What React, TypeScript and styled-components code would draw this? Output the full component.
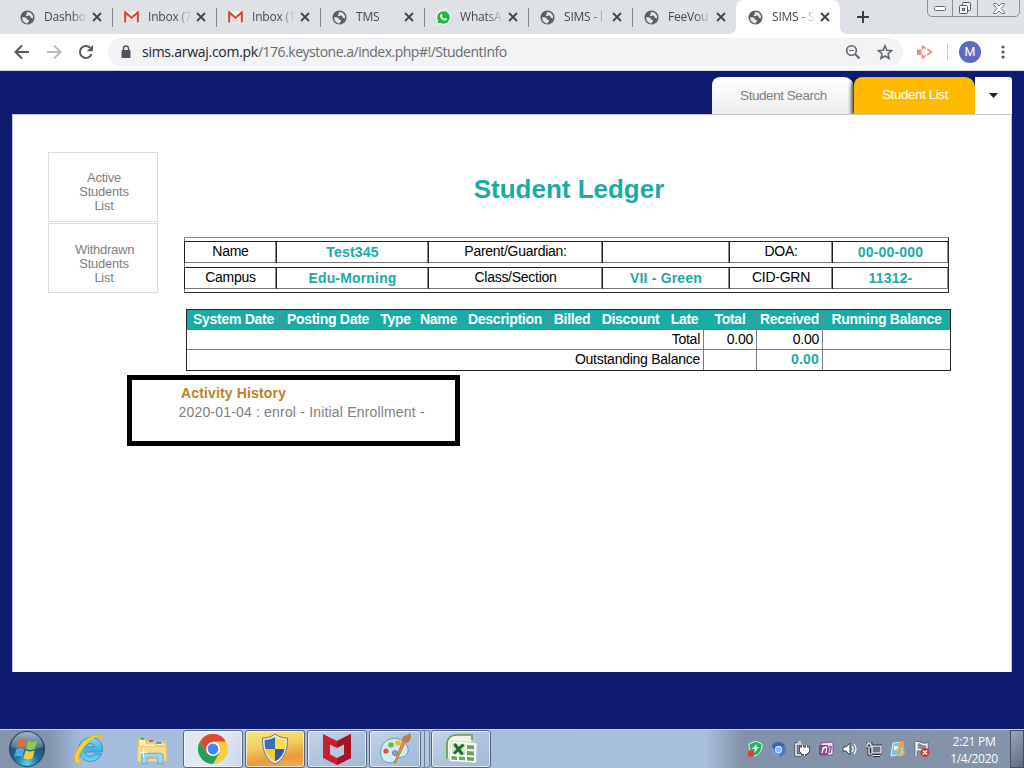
import React from "react";
import styled, { createGlobalStyle, css } from "styled-components";

const Global = createGlobalStyle`
  * { box-sizing: border-box; }
  body { margin: 0; overflow: hidden; }
`;

const uiFont = css`font-family: "Open Sans", "Noto Sans", sans-serif;`;

const Screen = styled.div`
  width: 1024px;
  height: 768px;
  display: flex;
  flex-direction: column;
  overflow: hidden;
  background: #0d1c70;
  font-family: "Liberation Sans", Arial, sans-serif;
`;

/* ---------- browser ---------- */

const TabStrip = styled.div`
  height: 34px;
  flex: none;
  display: flex;
  padding-left: 8px;
  background: #dee1e6;
  position: relative;
  ${uiFont}
`;

const BrowserTab = styled.div<{ $active?: boolean; $last?: boolean }>`
  width: 104px;
  height: 34px;
  padding: 0 10px 0 12px;
  display: flex;
  align-items: center;
  position: relative;
  font-size: 12px;
  color: #45484c;
  background: ${(p) => (p.$active ? "#fff" : "transparent")};
  border-radius: 8px 8px 0 0;
  &::before {
    content: "";
    display: ${(p) => (p.$active ? "block" : "none")};
    position: absolute;
    left: -6px;
    right: -6px;
    bottom: 0;
    height: 6px;
    background:
      radial-gradient(circle at 0 0, transparent 5.5px, #fff 6px) left / 6px 6px no-repeat,
      radial-gradient(circle at 100% 0, transparent 5.5px, #fff 6px) right / 6px 6px no-repeat;
  }
  &::after {
    content: "";
    position: absolute;
    right: -1px;
    top: 8px;
    width: 1px;
    height: 19px;
    background: ${(p) => (p.$active || p.$last ? "transparent" : "#85888d")};
  }
`;

const TabTitle = styled.span`
  width: 42px;
  flex: none;
  margin-left: 9px;
  white-space: nowrap;
  letter-spacing: -0.2px;
  line-height: 18px;
  mask-image: linear-gradient(90deg, #000 65%, rgba(0, 0, 0, 0.2) 95%);
`;

const TabClose = styled.svg`
  width: 10px;
  height: 10px;
  flex: none;
  margin-left: auto;
`;

const NewTab = styled.svg`
  width: 14px;
  height: 14px;
  margin: 10px 0 0 16px;
`;

const WindowButtons = styled.div`
  position: absolute;
  top: -1px;
  right: 4px;
  width: 93px;
  height: 18px;
  display: grid;
  grid-template-columns: 24px 25px 1fr;
  border: 1px solid #8b8e93;
  border-radius: 0 0 5px 5px;
  background: #dfe2e7;
`;

const WindowButton = styled.div`
  display: flex;
  align-items: center;
  justify-content: center;
  & + & { border-left: 1px solid #8b8e93; }
`;

const Toolbar = styled.div`
  height: 37px;
  flex: none;
  display: flex;
  align-items: center;
  background: #fff;
  border-bottom: 1px solid #d8dbe0;
  padding-left: 14px;
  ${uiFont}
`;

const NavIcon = styled.svg`
  width: 16px;
  height: 16px;
  flex: none;
  margin-right: 16px;
`;

const Address = styled.div`
  width: 795px;
  height: 28px;
  margin-left: -2px;
  padding: 0 10px 0 11px;
  display: flex;
  align-items: center;
  gap: 16px;
  border-radius: 14px;
  background: #f1f3f4;
`;

const Url = styled.div`
  flex: 1;
  margin-left: -7px;
  font-size: 14px;
  letter-spacing: -0.5px;
  line-height: 20px;
  color: #676a6e;
  white-space: nowrap;
  b { font-weight: 400; color: #222427; letter-spacing: -0.27px; }
`;

const ExtensionIcon = styled.svg`
  width: 18px;
  height: 14px;
  margin-left: 13px;
`;

const Divider = styled.div`
  width: 1px;
  height: 16px;
  margin: 0 11px 0 13px;
  background: #c5c8cc;
`;

const Avatar = styled.div`
  width: 22px;
  height: 22px;
  margin-right: 19px;
  border-radius: 50%;
  background: #5c6bc0;
  color: #fff;
  font: 12.5px/22px Roboto, sans-serif;
  text-align: center;
`;

/* ---------- page ---------- */

const Page = styled.main`
  height: 658px;
  flex: none;
  padding: 6px 12px 57px;
  display: flex;
  flex-direction: column;
`;

const SectionTabs = styled.nav`
  height: 37px;
  flex: none;
  display: flex;
  justify-content: flex-end;
`;

const SectionTab = styled.div<{ $active?: boolean }>`
  width: ${(p) => (p.$active ? 121 : 142)}px;
  height: 37px;
  border-radius: 8px 10px 0 0;
  font-size: 13.5px;
  letter-spacing: -0.45px;
  line-height: ${(p) => (p.$active ? 35 : 37)}px;
  text-align: center;
  padding-left: 1px;
  color: ${(p) => (p.$active ? "#fff" : "#808080")};
  background: ${(p) => (p.$active ? "#ffba00" : "linear-gradient(#fff, #ededed)")};
  box-shadow: ${(p) => (p.$active ? "-2px 1px 4px rgba(0,0,0,.9)" : "none")};
  clip-path: ${(p) => (p.$active ? "inset(0 0 0 -6px)" : "none")};
  z-index: ${(p) => (p.$active ? 1 : 0)};
`;

const TabMenu = styled.div`
  width: 37px;
  border-radius: 0 3px 0 0;
  background: #fff;
  display: flex;
  align-items: center;
  justify-content: center;
`;

const Panel = styled.div`
  flex: 1;
  background: #fff;
  border: 1px solid #c5c5c9;
  border-bottom: 0;
  display: flex;
`;

const SideMenu = styled.div`
  width: 110px;
  margin: 37px 0 0 35px;
  display: flex;
  flex-direction: column;
  gap: 1px;
`;

const SideItem = styled.div`
  height: 70px;
  padding: 18px 24px 0 26px;
  border: 1px solid #dcdcdc;
  font-size: 13px;
  letter-spacing: -0.25px;
  line-height: 14px;
  text-align: center;
  color: #808080;
  & + & { padding-top: 19px; }
`;

const Content = styled.section`
  width: 824px;
  margin-left: -31px;
  padding-top: 58px;
`;

const Title = styled.h1`
  margin: 0 0 0 58px;
  width: 768px;
  font-size: 26px;
  line-height: 32px;
  font-weight: 700;
  text-align: center;
  color: #1aaba8;
`;

const InfoTable = styled.div`
  width: 765px;
  height: 56px;
  margin: 32px 0 0 57px;
  padding: 3px 0;
  display: flex;
  flex-direction: column;
  gap: 4px;
  border: 1px solid #2c2c2c;
  border-top-color: #888;
  border-left-color: #777;
`;

const InfoRow = styled.div`
  height: 22px;
  margin-left: -1px;
  display: grid;
  grid-template-columns: 92px 152px 174px 127px 103px 116px;
  border-top: 1px solid #222;
  border-bottom: 1px solid #777;
`;

const InfoCell = styled.div<{ $value?: boolean }>`
  border-left: 1px solid #222;
  border-right: 1px solid #8a8a8a;
  padding-left: 1px;
  font-size: 14px;
  font-weight: ${(p) => (p.$value ? 700 : 400)};
  letter-spacing: ${(p) => (p.$value ? "0.17px" : "-0.27px")};
  line-height: ${(p) => (p.$value ? 21 : 19)}px;
  color: ${(p) => (p.$value ? "#1aaba8" : "#000")};
  text-align: center;
  white-space: nowrap;
`;

const Ledger = styled.div`
  width: 765px;
  height: 62px;
  margin: 16px 0 0 59px;
  border: 1px solid #222;
`;

const LedgerHead = styled.div`
  height: 19px;
  display: grid;
  grid-template-columns: 94px 95px 40px 46px 87px 47px 70px 38px 53px 66px 127px;
  background: #18aba8;
`;

const HeadCell = styled.div`
  border-right: 1px solid #5e908f;
  font-size: 14px;
  letter-spacing: -0.28px;
  line-height: 18px;
  font-weight: 700;
  text-align: center;
  white-space: nowrap;
  color: #fff;
  &:last-child { border-right: 0; }
`;

const LedgerRow = styled.div`
  height: 20px;
  display: grid;
  grid-template-columns: 517px 53px 66px 127px;
  border-top: 1px solid #7b7b7b;
  &:last-child { height: 21px; }
`;

const LedgerCell = styled.div<{ $accent?: boolean }>`
  border-right: 1px solid #7b7b7b;
  padding-right: 3px;
  font-size: 14px;
  line-height: 19px;
  font-weight: ${(p) => (p.$accent ? 700 : 400)};
  letter-spacing: ${(p) => (p.$accent ? "0.2px" : "-0.26px")};
  color: ${(p) => (p.$accent ? "#1aaba8" : "#000")};
  text-align: right;
  &:last-child { border-right: 0; }
`;

const History = styled.div`
  width: 333px;
  height: 71px;
  margin-top: 4px;
  padding: 4px 0 0 46px;
  border: 5px solid #000;
  white-space: nowrap;
`;

const HistoryTitle = styled.div`
  margin-left: 3px;
  font-size: 14px;
  line-height: 18px;
  letter-spacing: 0.15px;
  font-weight: 700;
  color: #be8126;
`;

const HistoryEntry = styled.div`
  margin-left: 0.5px;
  font-size: 14px;
  line-height: 20px;
  letter-spacing: 0.18px;
  color: #808080;
`;

/* ---------- taskbar ---------- */

const Taskbar = styled.footer`
  height: 39px;
  flex: none;
  display: flex;
  align-items: stretch;
  background: linear-gradient(90deg, #8494ac 0, #8294ad 48px, #a4bddd 82px, #a7c0dd 705px, #8192a9 742px, #8293aa 100%);
  border-top: 1px solid #c3d5e6;
  color: #fff;
  ${uiFont}
`;

const Launcher = styled.div<{ $width: number }>`
  width: ${(p) => p.$width}px;
  display: flex;
  align-items: center;
  justify-content: center;
`;

const TaskButton = styled.div<{ $tone?: "active" | "alert"; $width?: number }>`
  width: ${(p) => p.$width ?? 60}px;
  margin-right: 2px;
  display: flex;
  align-items: center;
  justify-content: center;
  border: 1px solid #53657f;
  border-radius: 3px;
  box-shadow: inset 0 0 0 1px rgba(255, 255, 255, 0.65);
  background: ${(p) =>
    p.$tone === "active"
      ? "linear-gradient(120deg, #dce6f3, #e3eaf4 50%, #c9d7ea)"
      : p.$tone === "alert"
      ? "linear-gradient(170deg, #f3e984, #f2cf62 40%, #eb9a3c 72%, #f0b05a)"
      : "linear-gradient(150deg, #c5d5e9, #afc4df 50%, #a2b9d7)"};
`;

const StackEdges = styled.div`
  width: 9px;
  margin: 0 1px 0 -2px;
  border: solid #6e819d;
  border-width: 1px 1px 1px 0;
  border-radius: 0 3px 3px 0;
  background: linear-gradient(90deg, #b5c8e0 3px, #6e819d 3px, #6e819d 4px, #b5c8e0 4px);
`;

const Tray = styled.div`
  margin-left: auto;
  display: flex;
  align-items: center;
  gap: 8px;
`;

const Clock = styled.div`
  width: 72px;
  font-size: 12px;
  line-height: 17px;
  letter-spacing: -0.3px;
  text-align: center;
  padding-top: 1px;
`;

const ShowDesktop = styled.div`
  width: 14px;
  height: 38px;
  margin-left: -8px;
  border: 1px solid #414e61;
  background: linear-gradient(135deg, #9aa8bb, #5c6b82);
`;

/* ---------- icons ---------- */

const Globe = () => (
  <svg width="15" height="15" viewBox="0 0 16 16">
    <circle cx="8" cy="8" r="7.5" fill="#5a5e63" />
    <path d="M2.2 7.6 5.5 8c1.2.1 1.8.8 1.8 2l2 .7c.8.4.6 1.4-.4 1.900l-.3 1.500C5.200 14.400 2 11.500 2.200 7.600zM8.600 2c-1.800.4-1.900 1.300-1.200 2.300L5.900 5.600C6.500 6.800 8.200 7 8.500 5.600L11 6.500 11.300 8.200 13.900 9C14.500 5.500 12 2.300 8.600 2z" fill="#e3e6ea" />
  </svg>
);

const Gmail = () => (
  <svg width="15" height="12" viewBox="0 0 15 12">
    <path d="M1 .6h13v11H1z" fill="#f4f1ef" />
    <path d="m3 11 4.500-4.500L12 11z" fill="#dedad8" />
    <path d="M1.200 11.500V1.400l6.300 5.300 6.300-5.300v10.100" fill="none" stroke="#d74236" strokeWidth="2" />
  </svg>
);

const Whatsapp = () => (
  <svg width="15" height="15" viewBox="0 0 16 16">
    <path d="M8 0A7.900 7.900 0 0 0 1.200 11.800L.2 15.900l4-1A7.900 7.900 0 1 0 8 0z" fill="#fff" />
    <path d="M8 1.200a6.700 6.700 0 0 0-5.700 10.200l-.8 3 3-.8A6.700 6.700 0 1 0 8 1.200z" fill="#16bd40" />
    <path d="M5.200 4.300c.6-.5 1-.2 1.200.4l.5 1.100-.6.9c.7 1.300 1.600 2 2.700 2.500l.8-1 1.800.9c.3.4-.2 1.800-1.500 2.100-2.600.6-6.400-3.100-5.800-5.200.1-.7.5-1.300.9-1.700z" fill="#fff" />
  </svg>
);

const favicons = { globe: Globe, gmail: Gmail, whatsapp: Whatsapp };

const StartOrb = () => (
  <svg width="38" height="38" viewBox="0 0 38 38">
    <defs>
      <radialGradient id="orb" cx=".5" cy=".92" r=".75">
        <stop offset="0" stopColor="#57d9f6" />
        <stop offset=".45" stopColor="#1d6d9c" />
        <stop offset="1" stopColor="#21445f" />
      </radialGradient>
      <linearGradient id="orbGloss" x2="0" y2="1">
        <stop stopColor="#c8d8e2" />
        <stop offset="1" stopColor="#5b8198" />
      </linearGradient>
    </defs>
    <circle cx="19" cy="19" r="17.500" fill="url(#orb)" stroke="#24445d" />
    <path d="M3 17a16 15 0 0 1 32 0c-8 3-24 3-32 0z" fill="url(#orbGloss)" opacity=".75" />
    <g transform="translate(-1.900 -1.900) scale(1.100)">
      <path d="M11.500 10.500c2.500-1.500 5-1.300 7 .1l-1.700 7.500c-2.300-1.500-4.800-1.500-7.300-.2z" fill="#eb6a31" />
      <path d="M19.700 11.500c2.700 1.500 5.200 1.500 8.500-.2l-2 7.500c-2.800 1.600-5.800 1.500-8.200 0z" fill="#90c948" />
      <path d="M9.200 19.200c2.500-1.500 5-1.300 7.300.1l-1.800 7.200c-2.300-1.500-4.600-1.500-7.300-.2z" fill="#4aaee9" />
      <path d="M17.700 20.200c2.600 1.500 5.200 1.500 8.300 0l-2 7.300c-2.700 1.500-5.600 1.400-8.200-.1z" fill="#fac93c" />
    </g>
  </svg>
);

const Explorer = () => (
  <svg width="32" height="32" viewBox="0 0 32 32">
    <defs>
      <linearGradient id="ie" x2="0" y2="1">
        <stop stopColor="#86def8" />
        <stop offset=".5" stopColor="#3fb2e8" />
        <stop offset="1" stopColor="#76d6f5" />
      </linearGradient>
    </defs>
    <path d="M17 4.500a12 12 0 1 0 11.500 16.500h-7c-2.500 4-9 2.500-9-2h17C30.500 10 25 4.500 17 4.500zm-4.500 9.500c1-4.500 8.300-4.500 9.200 0z" fill="url(#ie)" stroke="#258bc8" strokeWidth=".9" />
    <path d="M29 9.500C32.500-1 22 1 14.500 5.500 6 11 .5 21.500 1.500 27.500c1 4.500 7 2.500 9.500.5-3 .5-5.500 0-5.500-3C6 18.500 16 7.500 22.500 4.500c4-1.500 6.500 0 6.500 5z" fill="#f8cf35" stroke="#d8a321" strokeWidth=".5" />
  </svg>
);

const Folder = () => (
  <svg width="32" height="31" viewBox="0 0 34 32">
    <path d="M2 4h9l1 3h20v22H2z" fill="#e9ca76" />
    <path d="M3 5h7l1 4h21v5H3zM11 7h9l1 3H11zM21 8h9v4h-9z" fill="#fff0b4" stroke="#d2ae5d" strokeWidth=".7" />
    <path d="M5 3.500h4v2H5z" fill="#37a64b" />
    <path d="M14 6h4v2h-4z" fill="#d34a37" />
    <path d="M22 8h5v2h-5z" fill="#368ce0" />
    <path d="M1.500 13h31v16h-31z" fill="#f6dc87" stroke="#dfbd68" strokeWidth=".7" />
    <path d="M6 31V23q0-3 3-3h17q3 0 3 3v8h-6v-6H12v6z" fill="#9bd5ee" stroke="#559dbf" strokeWidth=".8" />
    <path d="M8 14v10M4 19h8" stroke="#fff" strokeWidth="1" />
  </svg>
);

const ChromeLogo = ({ size = 30, blue = false }: { size?: number; blue?: boolean }) => (
  <svg width={size} height={size} viewBox="0 0 30 30">
    <circle cx="15" cy="15" r="15" fill={blue ? "#4a78c6" : "#fdca3c"} />
    <path d="M15 15 2 7.500A15 15 0 0 1 28 7.500H15z" fill={blue ? "#3765b4" : "#df4838"} />
    <path d="M2 7.500A15 15 0 0 0 15 30l6.500-11.250L15 15l-6.500 3.750z" fill={blue ? "#6b9ce5" : "#23a15a"} />
    <path d="M2 7.500 8.500 18.750 15 15 11 7.500z" fill={blue ? "#3765b4" : "#df4838"} />
    <circle cx="15" cy="15" r="6.900" fill="#fff" />
    <circle cx="15" cy="15" r="5.400" fill={blue ? "#8fb9f6" : "#4285f4"} />
  </svg>
);

const Shield = () => (
  <svg width="28" height="32" viewBox="0 0 28 32">
    <path d="M14 1c4 3 8 4 12.500 4C27 17 23 27 14 31 5 27 1 17 1.500 5 6 5 10 4 14 1z" fill="#e7e5dc" stroke="#777a7d" />
    <path d="M14 4v12H4.500C4 13 3.500 10 3.700 7 7.500 7 11 6 14 4z" fill="#386fb6" />
    <path d="M14 4c3 2 6.500 3 10.300 3 .2 3-.3 6-.8 9H14z" fill="#fbdc4e" />
    <path d="M4.500 16H14v12.300C9 26 5.800 21.500 4.500 16z" fill="#f7cb31" />
    <path d="M14 16h9.500C22.200 21.500 19 26 14 28.300z" fill="#2b5da4" />
  </svg>
);

const Mcafee = () => (
  <svg width="30" height="34" viewBox="0 0 30 34">
    <path d="m1 2 14 7 14-7v24l-14 7-14-7z" fill="#c91f31" />
    <path d="m15 9 14-7v24l-14 7v-7l7-3.500V12.500L15 16z" fill="#a51525" />
    <path d="m8 12.500 7 3.500 7-3.500v10L15 26l-7-3.500z" fill="#b6c9e1" />
  </svg>
);

const Paint = () => (
  <svg width="34" height="34" viewBox="0 0 34 34">
    <path d="M4 14C7 7 17 4 23 8s9 9 6 14-8 2-10 5-6 5-11 3S1 20 4 14z" fill="#d2ebf8" stroke="#5e9abc" />
    <circle cx="8" cy="19" r="2.600" fill="#e84b3a" />
    <circle cx="13" cy="13" r="2.800" fill="#61bf47" />
    <circle cx="20" cy="11" r="2.800" fill="#f4bd28" />
    <circle cx="17" cy="21" r="2.500" fill="#7fb1cf" stroke="#4b85a8" />
    <path d="M28 9 18 30q-1 3-1.500 0L25 8z" fill="#ef9334" stroke="#b36823" strokeWidth=".7" />
    <path d="M24 7c1-4 5-3 8-6 2 3 1 8-3 10z" fill="#b67e51" />
  </svg>
);

const Excel = () => (
  <svg width="33" height="32" viewBox="0 0 33 32">
    <path d="M2 26V10q1-8 10-8h15v5" fill="#edf6e6" stroke="#55a548" strokeWidth="1.700" />
    <path d="M2 26h6V8h19" fill="#edf6e6" />
    <path d="m6 8 26 2-1 20-27-2z" fill="#fff" stroke="#b4ceae" strokeWidth=".6" />
    <path d="m22 12 7 .5v4l-7-.5zM22 18l7 .5v4l-7-.5zM22 24l7 .5v3.500l-7-.5zM14 23.500l6 .5v3.500l-6-.5zM6.500 23l5.500.5V27l-5.500-.5z" fill="#68a45c" />
    <path d="m7 10 13.500 1-.5 11-13-1z" fill="#d3e6ca" />
    <path d="m9.500 11 8 10.500M18.500 11.500 9 20.500" stroke="#1f6a2d" strokeWidth="3" />
  </svg>
);

const TrayIcon = styled.svg`
  width: 16px;
  height: 16px;
  flex: none;
`;

/* ---------- data ---------- */

const browserTabs: { title: string; icon: keyof typeof favicons }[] = [
  { title: "Dashbo", icon: "globe" },
  { title: "Inbox (7", icon: "gmail" },
  { title: "Inbox (1", icon: "gmail" },
  { title: "TMS", icon: "globe" },
  { title: "WhatsA", icon: "whatsapp" },
  { title: "SIMS - l", icon: "globe" },
  { title: "FeeVou", icon: "globe" },
  { title: "SIMS - S", icon: "globe" },
];

const info = [
  ["Name", "Test345", "Parent/Guardian:", "", "DOA:", "00-00-000"],
  ["Campus", "Edu-Morning", "Class/Section", "VII - Green", "CID-GRN", "11312-"],
];

const columns = ["System Date", "Posting Date", "Type", "Name", "Description", "Billed", "Discount", "Late", "Total", "Received", "Running Balance"];

export default function App() {
  return (
    <Screen>
      <Global />
      <TabStrip>
        {browserTabs.map((tab, i) => {
          const Icon = favicons[tab.icon];
          const active = i === browserTabs.length - 1;
          return (
            <BrowserTab key={i} $active={active} $last={i === browserTabs.length - 2}>
              <Icon />
              <TabTitle>{tab.title}</TabTitle>
              <TabClose viewBox="0 0 10 10">
                <path d="m1 1 8 8M9 1 1 9" stroke="#404347" strokeWidth="1.800" />
              </TabClose>
            </BrowserTab>
          );
        })}
        <NewTab viewBox="0 0 14 14">
          <path d="M7 1v12M1 7h12" stroke="#3c4043" strokeWidth="2" />
        </NewTab>
        <WindowButtons>
          <WindowButton>
            <svg width="12" height="6" viewBox="0 0 12 6"><rect x=".5" y="1.500" width="11" height="4" rx="1" fill="#fff" stroke="#65686d" /></svg>
          </WindowButton>
          <WindowButton>
            <svg width="14" height="14" viewBox="0 0 14 14" fill="#f6f7f8" stroke="#55585d"><rect x="4.500" y="1.500" width="8" height="8" rx="1" /><rect x="1.500" y="4.500" width="8" height="8" rx="1" /><rect x="4.500" y="7.500" width="2" height="2" /></svg>
          </WindowButton>
          <WindowButton>
            <svg width="12" height="11" viewBox="0 0 12 11"><path d="M.5.5h3L6 3 8.500.5h3v1L8 5.500l3.500 4v1h-3L6 8l-2.500 2.500h-3v-1L4 5.500.5 1.500z" fill="#fff" stroke="#74777c" /></svg>
          </WindowButton>
        </WindowButtons>
      </TabStrip>
      <Toolbar>
        <NavIcon viewBox="0 0 16 16"><path d="M15 8H2M8 1.500 1.500 8 8 14.500" fill="none" stroke="#55595e" strokeWidth="2" /></NavIcon>
        <NavIcon viewBox="0 0 16 16"><path d="M1 8h13M8 1.500 14.500 8 8 14.500" fill="none" stroke="#b9bbbe" strokeWidth="2" /></NavIcon>
        <NavIcon viewBox="0 0 16 16"><path d="M13.500 10.200A6 6 0 1 1 12.200 3.800" fill="none" stroke="#55595e" strokeWidth="2" /><path d="M15 1v6.200H8.800z" fill="#55595e" /></NavIcon>
        <Address>
          <svg width="14" height="14" viewBox="0 0 14 14"><path d="M3 5.500h8v7H3z" fill="#505459" stroke="#505459" /><path d="M4.500 5V3.500a2.500 2.500 0 0 1 5 0V5" fill="none" stroke="#505459" strokeWidth="1.400" /></svg>
          <Url><b>sims.arwaj.com.pk</b>/176.keystone.a/index.php#!/StudentInfo</Url>
          <svg width="16" height="16" viewBox="0 0 16 16" fill="none" stroke="#5f6368"><circle cx="6.500" cy="6.500" r="4.800" strokeWidth="1.600" /><path d="m10 10 4.500 4.500" strokeWidth="2" /><path d="M4.200 6.500h4.600" /></svg>
          <svg width="16" height="16" viewBox="0 0 16 16"><path d="m8 1.700 1.800 4.500 4.900.4L11 9.800l1.100 4.700L8 12l-4.100 2.500L5 9.800 1.300 6.600l4.900-.4z" fill="none" stroke="#5f6368" strokeWidth="1.500" /></svg>
        </Address>
        <ExtensionIcon viewBox="0 0 18 14"><path d="M1 4.500h4.500v5.500H1z" fill="#fb8584" /><path d="M6.500 4.500v-3l3.500 2M11 4l4.500 3-4.500 3M10 10.500l-3.500 2v-3" fill="none" stroke="#fb8584" strokeWidth="1.700" /></ExtensionIcon>
        <Divider />
        <Avatar>M</Avatar>
        <svg width="6" height="16" viewBox="0 0 6 16" fill="#55595e"><circle cx="3" cy="3" r="1.600" /><circle cx="3" cy="8" r="1.600" /><circle cx="3" cy="13" r="1.600" /></svg>
      </Toolbar>

      <Page>
        <SectionTabs>
          <SectionTab>Student Search</SectionTab>
          <SectionTab $active>Student List</SectionTab>
          <TabMenu>
            <svg width="9" height="5" viewBox="0 0 9 5"><path d="M0 0h9L4.500 5z" fill="#222" /></svg>
          </TabMenu>
        </SectionTabs>
        <Panel>
          <SideMenu>
            <SideItem>Active Students List</SideItem>
            <SideItem>Withdrawn Students List</SideItem>
          </SideMenu>
          <Content>
            <Title>Student Ledger</Title>
            <InfoTable>
              {info.map((row) => (
                <InfoRow key={row[0]}>
                  {row.map((cell, i) => <InfoCell key={i} $value={i % 2 === 1}>{cell}</InfoCell>)}
                </InfoRow>
              ))}
            </InfoTable>
            <Ledger>
              <LedgerHead>{columns.map((c) => <HeadCell key={c}>{c}</HeadCell>)}</LedgerHead>
              <LedgerRow>
                <LedgerCell>Total</LedgerCell>
                <LedgerCell>0.00</LedgerCell>
                <LedgerCell>0.00</LedgerCell>
                <LedgerCell />
              </LedgerRow>
              <LedgerRow>
                <LedgerCell>Outstanding Balance</LedgerCell>
                <LedgerCell />
                <LedgerCell $accent>0.00</LedgerCell>
                <LedgerCell />
              </LedgerRow>
            </Ledger>
            <History>
              <HistoryTitle>Activity History</HistoryTitle>
              <HistoryEntry>2020-01-04 : enrol - Initial Enrollment -</HistoryEntry>
            </History>
          </Content>
        </Panel>
      </Page>

      <Taskbar>
        <Launcher $width={54}><StartOrb /></Launcher>
        <Launcher $width={70}><Explorer /></Launcher>
        <Launcher $width={55}><Folder /></Launcher>
        <Launcher $width={4} />
        <TaskButton $tone="active"><ChromeLogo /></TaskButton>
        <TaskButton $tone="alert"><Shield /></TaskButton>
        <TaskButton><Mcafee /></TaskButton>
        <TaskButton $width={52}><Paint /></TaskButton>
        <StackEdges />
        <TaskButton><Excel /></TaskButton>
        <Tray>
          <TrayIcon viewBox="0 0 16 16"><path d="M2 3 9 0l6 3c0 6-2 10-7 12C4 13 2 8 2 3z" fill="#24b263" stroke="#e7faed" /><path d="M10 3 5 8h3l-1 4 5-6H9z" fill="#fff" /><circle cx="4" cy="12.500" r="3.300" fill="#f13434" /></TrayIcon>
          <ChromeLogo size={15} blue />
          <TrayIcon viewBox="0 0 16 16"><path d="M8 3H2v11h5M4 1h3" fill="none" stroke="#3b4350" strokeWidth="3" /><path d="M8 3H2v11h5M4 1h3" fill="none" stroke="#fff" strokeWidth="1.500" /><path d="M6.500 7h8v3l-2 2.500h-4l-2-2.500zM8.500 4v3M12.500 4v3M10.500 12v3" fill="#fff" stroke="#3b4350" strokeWidth="3" /><path d="M6.500 7h8v3l-2 2.500h-4l-2-2.500zM8.500 4v3M12.500 4v3M10.500 12v3" fill="#fff" stroke="#fff" strokeWidth="1.200" /></TrayIcon>
          <TrayIcon viewBox="0 0 16 16"><path d="M3 2 15 1v13H2z" fill="#f5e9f5" stroke="#8d4b93" /><path d="M1 4h9v10H1z" fill="#894891" /><path d="m4 12 1.500-6M5 8q4-4 3.500 0L8 12" fill="none" stroke="#fff" strokeWidth="1.400" /><path d="m10 12 1-6q3-2 2 1l-1 5" fill="none" stroke="#894891" strokeWidth="1.300" /></TrayIcon>
          <TrayIcon viewBox="0 0 16 16"><path d="M1 6h3l4-4v12l-4-4H1z" fill="#fff" stroke="#3b4350" /><path d="M10 5q2 3 0 6M12 3q4 5 0 10" fill="none" stroke="#fff" strokeWidth="1.200" /></TrayIcon>
          <TrayIcon viewBox="0 0 16 16"><path d="M6 5h9v7H6zM7 14.500h7M3 7v6h3M1 3h4v3H1zM2 1v2M4 1v2" fill="none" stroke="#252d38" strokeWidth="3" /><path d="M6 5h9v7H6z" fill="#68788f" stroke="#fff" strokeWidth="1.200" /><path d="M7 14.500h7M3 7v6h3M1 3h4v3H1zM2 1v2M4 1v2" fill="none" stroke="#fff" strokeWidth="1.200" /></TrayIcon>
          <TrayIcon viewBox="0 0 16 16"><path d="m3 2 10-1-1 12-11 2z" fill="#77bee8" stroke="#e1f2fb" /><path d="M9 1h5v5H9z" fill="#efa33a" /><path d="M4 5h4v4H4z" fill="#ebf5fd" /><path d="M7 11a4 4 0 0 1 7-3M14 10a4 4 0 0 1-7 3" fill="none" stroke="#f2b13c" strokeWidth="2" /></TrayIcon>
          <TrayIcon viewBox="0 0 16 16"><path d="M2 1v14M3 2q3-1 5 1 2 1 5 0v7q-3 1-5-1-2-1-5 0z" fill="#7c8da5" stroke="#3b4350" strokeWidth="2.600" /><path d="M2 1v14M3 2q3-1 5 1 2 1 5 0v7q-3 1-5-1-2-1-5 0z" fill="#7c8da5" stroke="#fff" strokeWidth="1.400" /><circle cx="11" cy="11.500" r="4.500" fill="#d63630" /><path d="m9 9.500 4 4m0-4-4 4" stroke="#fff" strokeWidth="1.500" /></TrayIcon>
          <Clock>2:21 PM<br />1/4/2020</Clock>
          <ShowDesktop />
        </Tray>
      </Taskbar>
    </Screen>
  );
}
